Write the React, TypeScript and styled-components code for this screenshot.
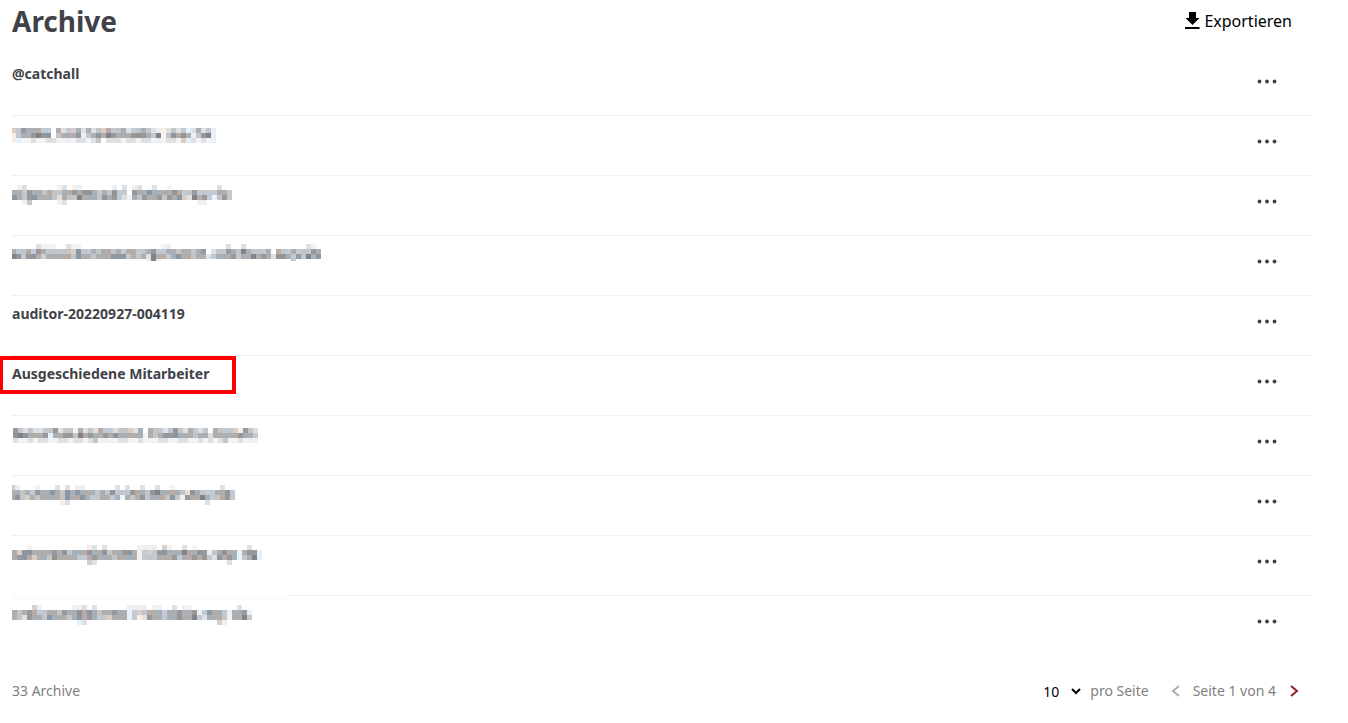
import React from 'react';
import styled, { createGlobalStyle, css } from 'styled-components';

const GlobalStyle = createGlobalStyle`
  *, *::before, *::after { box-sizing: border-box; }
  body {
    margin: 0;
    background: #fff;
    color: #3f4349;
    font-family: "Noto Sans", "Open Sans", sans-serif;
    font-size: 14px;
    line-height: 20px;
  }
  button, select { font: inherit; color: inherit; background: none; border: 0; margin: 0; padding: 0; cursor: pointer; }
`;

const Page = styled.main`
  padding: 0 36px 20px 12px;
`;

const Header = styled.header`
  display: flex;
  justify-content: space-between;
  align-items: flex-start;
  height: 56px;
  padding-right: 20px;
`;

const Title = styled.h1`
  margin: 0;
  padding-top: 1px;
  font-size: 28px;
  line-height: 40px;
  font-weight: 700;
`;

const ExportButton = styled.button`
  display: flex;
  align-items: center;
  gap: 4px;
  padding-top: 9px;
  font-size: 16px;
  line-height: 24px;
  color: #000;
`;

const List = styled.ul`
  list-style: none;
  margin: 0;
  padding: 0;
`;

const Row = styled.li<{ $faded?: boolean }>`
  position: relative;
  display: flex;
  justify-content: space-between;
  align-items: flex-start;
  height: 60px;
  padding: 8px 35px 0 0;
  border-bottom: 1px solid #f0f0f1;
  &:last-child { border-bottom-color: transparent; }
  ${(p) =>
    p.$faded &&
    css`
      &::before {
        content: '';
        position: absolute;
        left: 0;
        top: -1px;
        width: 276px;
        height: 5px;
        background: #fcfcfc;
      }
    `}
`;

const Name = styled.span<{ $marked?: boolean }>`
  position: relative;
  font-weight: 700;
  ${(p) =>
    p.$marked &&
    css`
      &::after {
        content: '';
        position: absolute;
        inset: -8px -27px -10px -13px;
        border: 4px solid #fe0000;
        pointer-events: none;
      }
    `}
`;

const MenuButton = styled.button`
  display: flex;
  align-items: center;
  height: 35px;
  svg { display: block; }
`;

const Mosaic = styled.svg`
  display: block;
  flex: none;
`;

const Footer = styled.footer`
  display: flex;
  justify-content: space-between;
  align-items: center;
  padding: 24px 13px 0 0;
  color: #808083;
`;

const Pager = styled.nav`
  display: flex;
  align-items: center;
`;

const SizeLabel = styled.label`
  display: flex;
  align-items: center;
  gap: 9px;
  margin-right: 22px;
`;

const SelectBox = styled.span`
  position: relative;
  display: flex;
  svg { position: absolute; right: 0; top: 8px; pointer-events: none; }
`;

const SizeSelect = styled.select`
  appearance: none;
  width: 38px;
  height: 22px;
  padding-top: 2px;
  color: #000;
`;

const PageInfo = styled.span`
  margin: 0 14px 0 13px;
`;

const StepButton = styled.button<{ $color: string }>`
  display: flex;
  align-items: center;
  height: 20px;
  color: ${(p) => p.$color};
`;

const COLORS: Record<string, string> = {
  a: '#f3f3f4', b: '#dfe0e1', c: '#c4c5c6', d: '#adaeaf', e: '#99999c', f: '#828387',
  B: '#e9f1f8', C: '#c0cad4', D: '#a5b0b9', E: '#8d97a2',
  W: '#f6eee7', X: '#d8cdc7', Y: '#b5aca8', Z: '#98938f',
};

const CELL = 5;

interface MosaicData {
  x: number;
  y: number;
  height: number;
  lines: string[];
}

function HiddenName({ x, y, height, lines }: MosaicData) {
  const width = Math.max(...lines.map((l) => l.length)) * CELL - x;
  return (
    <Mosaic
      width={width}
      height={height}
      viewBox={`${x} ${y} ${width} ${height}`}
      shapeRendering="crispEdges"
      role="img"
      aria-label="Unkenntlich gemachter Name"
    >
      {lines.map((line, r) =>
        line.split('').map((c, i) =>
          COLORS[c] ? (
            <rect key={`${r}-${i}`} x={i * CELL} y={r * CELL} width={CELL} height={CELL} fill={COLORS[c]} />
          ) : null,
        ),
      )}
    </Mosaic>
  );
}

interface Archive {
  id: number;
  name?: string;
  marked?: boolean;
  faded?: boolean;
  mosaic?: MosaicData;
}

const ARCHIVES: Archive[] = [
  { id: 1, name: '@catchall' },
  {
    id: 2,
    mosaic: {
      x: 1, y: -4, height: 20,
      lines: [
        'XCeDDYCC.dbCXDbDbcXYCcDbCcdCbBWbcbCBbDbcB',
        'WCddefEE.cYDYeBcDEYfeDddeZedCfacEYZDBCefB',
        'WBaabaabbaaBabbabc.bbbabbabbaBabbaXBbabaB',
      ],
    },
  },
  {
    id: 3,
    mosaic: {
      x: 0, y: -1, height: 24,
      lines: [
        '.Wb......Wb.WB......B.b.Wb..b..a.........b',
        'ddCeDDcYcCDYedZEDCdcZCC.eDDEdDYdEYCceCcCCdYC',
        'EdceEDYdcbYccfYDdcEdeCbadceYDecedEXbfYeCBcec',
        '..Wc.....Wb..........................WB',
      ],
    },
  },
  {
    id: 4,
    mosaic: {
      x: 1, y: 0, height: 17,
      lines: [
        '.....baWa..bWa................aB...........b..b............ba',
        'dCcdCedCcCccXEcCDcdYcdCdYCcDeCCDdcYdCDe.bcCeDcfDccCd.YcCdCcCeD',
        'fEceEYXdDdYYcEDdcDYdEeEcYcDbfdYCDEdYcYDbCdDYeCdDfdedbZEDCecfDE',
        '...........................WfB..........................c',
      ],
    },
  },
  { id: 5, name: 'auditor-20220927-004119' },
  { id: 6, name: 'Ausgeschiedene Mitarbeiter', marked: true },
  {
    id: 7,
    mosaic: {
      x: -1, y: -4, height: 20,
      lines: [
        'eCbcbbCcebCcadbcbYCCbccXbD.dcCbcEcbdCbc.dcCcXWecb',
        'ZfEdYdeBDYeecfYeDYeYEdDYdDadcYEeEDdYcdDbYdDdYeDdC',
        'baababbaabbabbabcaBaabbaabaaabbaabbaabababcaabaBa',
      ],
    },
  },
  {
    id: 8,
    mosaic: {
      x: 2, y: -1, height: 24,
      lines: [
        'XB...a...b.b.WB......b.b..b..b..a.........b',
        'YDcDCedDEdcEDEdYDCdcECcCeYDcEfDdYDcbZDcCCdYEC',
        'YEcXDcYdDYcEDYEDCcdYCDadcYEcDdYcEcWeYdfDCcYeC',
        '..........Wb...........................b',
      ],
    },
  },
  {
    id: 9,
    mosaic: {
      x: 0, y: -1, height: 24,
      lines: [
        '...a...........Wb.b......WBWB.Xa..b.a..........b',
        'YXEEdDYDedEcDDYeDdEcYDeEDWCXCeEdDDfYdEeBcDZYDBdEeB',
        'deEYXdDcZddYDcCYedDdcYdDdWCcCddYeCdYeYeCbEYeDBcdfB',
        '...............Xb..........................b',
      ],
    },
  },
  {
    id: 10,
    faded: true,
    mosaic: {
      x: 0, y: -1, height: 24,
      lines: [
        '....XB......aBb.b......WBWB.aB..b.Wa.........b',
        'YcdeYCcDYcedDZYEDcYdeDdBCXcYdDCDdeDdeBCEYDCBdDeB',
        'dcbedDcEDdYcDEYeDCcXYDdBCWbeYdCDdEYdfCbDdYcadYfC',
        '.............Bb..........................XB',
      ],
    },
  },
];

const DownloadIcon = () => (
  <svg width="15" height="18" viewBox="0 0 15 18" aria-hidden="true">
    <path d="M4 0h7v6h3.500L7.500 13 .5 6H4zM0 15h14.500v2H0z" fill="#000" />
  </svg>
);

const DotsIcon = () => (
  <svg width="20" height="5" viewBox="0 0 20 5" fill="#3f4349" aria-hidden="true">
    <circle cx="2.500" cy="2.500" r="1.900" />
    <circle cx="10" cy="2.500" r="1.900" />
    <circle cx="17.500" cy="2.500" r="1.900" />
  </svg>
);

const Chevron = ({ d, w, h }: { d: string; w: number; h: number }) => (
  <svg width={w} height={h} viewBox={`0 0 ${w} ${h}`} fill="none" stroke="currentColor" strokeWidth="2" aria-hidden="true">
    <path d={d} />
  </svg>
);

export default function App() {
  return (
    <>
      <GlobalStyle />
      <Page>
        <Header>
          <Title>Archive</Title>
          <ExportButton type="button">
            <DownloadIcon />
            Exportieren
          </ExportButton>
        </Header>
        <List>
          {ARCHIVES.map((a) => (
            <Row key={a.id} $faded={a.faded}>
              {a.mosaic ? <HiddenName {...a.mosaic} /> : <Name $marked={a.marked}>{a.name}</Name>}
              <MenuButton type="button" aria-label="Aktionen">
                <DotsIcon />
              </MenuButton>
            </Row>
          ))}
        </List>
        <Footer>
          <span>33 Archive</span>
          <Pager aria-label="Seitennavigation">
            <SizeLabel>
              <SelectBox>
                <SizeSelect defaultValue="10">
                  <option>10</option>
                  <option>25</option>
                  <option>50</option>
                </SizeSelect>
                <svg width="10" height="7" viewBox="0 0 10 7" fill="none" stroke="#000" strokeWidth="2" aria-hidden="true">
                  <path d="M1 1l4 4 4-4" />
                </svg>
              </SelectBox>
              pro Seite
            </SizeLabel>
            <StepButton type="button" $color="#a9acb0" aria-label="Vorherige Seite">
              <Chevron w={9} h={12} d="M8 1L2 6l6 5" />
            </StepButton>
            <PageInfo>Seite 1 von 4</PageInfo>
            <StepButton type="button" $color="#981b1e" aria-label="Nächste Seite">
              <Chevron w={9} h={12} d="M1 1l6 5-6 5" />
            </StepButton>
          </Pager>
        </Footer>
      </Page>
    </>
  );
}
